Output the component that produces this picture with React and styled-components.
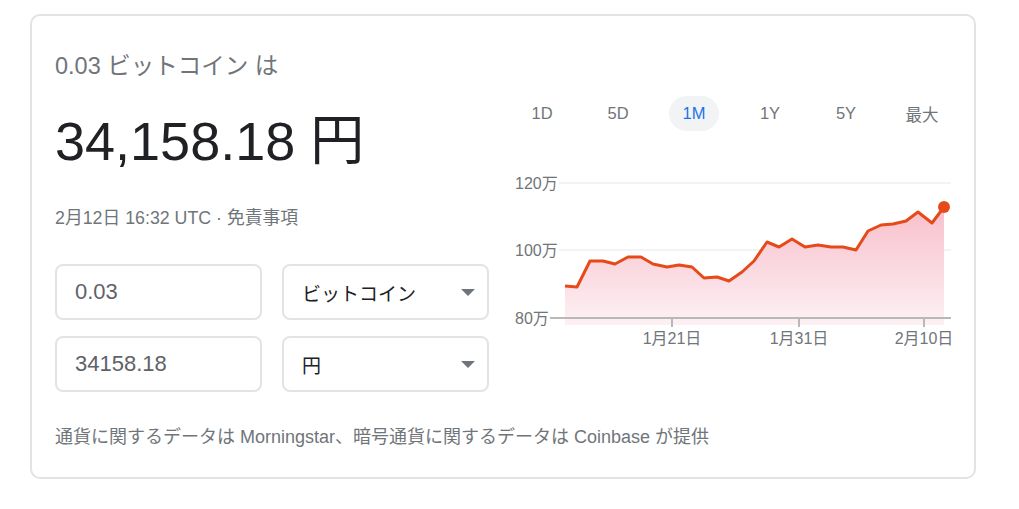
import React from 'react';
import styled, { createGlobalStyle } from 'styled-components';

const GlobalStyle = createGlobalStyle`
  body {
    margin: 0;
    background: #fff;
    font-family: "Liberation Sans", Arial, "Noto Sans CJK JP", sans-serif;
  }
`;

const Card = styled.div`
  box-sizing: border-box;
  width: 946px;
  margin: 14px 0 0 30px;
  padding: 35px 23px 28px 23px;
  border: 2px solid #e2e3e6;
  border-radius: 10px;
`;

const TopGrid = styled.div`
  display: grid;
  grid-template-columns: 434px 1fr;
  column-gap: 21px;
`;

const LeftCol = styled.div`
  display: flex;
  flex-direction: column;
`;

const Title = styled.div`
  font-size: 23.5px;
  line-height: 30px;
  color: #70757a;
`;

const Amount = styled.div`
  margin-top: 28px;
  font-size: 54px;
  line-height: 64px;
  color: #202124;
`;

const Updated = styled.div`
  margin-top: 33px;
  font-size: 17.8px;
  line-height: 24px;
  color: #70757a;
`;

const ConverterGrid = styled.div`
  margin-top: 34px;
  display: grid;
  grid-template-columns: 207px 207px;
  gap: 16px 20px;
`;

const AmountInput = styled.input`
  box-sizing: border-box;
  width: 100%;
  height: 56px;
  margin: 0;
  padding: 0 18px;
  border: 2px solid #e2e3e6;
  border-radius: 8px;
  font-family: inherit;
  font-size: 22px;
  color: #5f6368;
  background: #fff;
  outline: none;
`;

const Select = styled.div`
  box-sizing: border-box;
  height: 56px;
  padding: 0 12px 0 18px;
  border: 2px solid #e2e3e6;
  border-radius: 8px;
  display: flex;
  align-items: center;
  justify-content: space-between;
  font-size: 19px;
  color: #202124;
`;

const Caret = styled.span`
  width: 0;
  height: 0;
  border-left: 7px solid transparent;
  border-right: 7px solid transparent;
  border-top: 7px solid #70757a;
`;

const ChartCol = styled.div`
  display: flex;
  flex-direction: column;
`;

const RangeTabs = styled.div`
  margin-top: 45px;
  padding-left: 7px;
  display: flex;
  gap: 26px;
`;

const RangeTab = styled.div`
  width: 50px;
  height: 35px;
  border-radius: 18px;
  display: flex;
  align-items: center;
  justify-content: center;
  font-size: 16.5px;
  color: ${p => (p.$active ? '#1a73e8' : '#70757a')};
  background: ${p => (p.$active ? '#f1f3f4' : 'transparent')};
`;

const ChartSvg = styled.svg`
  display: block;
  margin-top: 35px;
  overflow: visible;
`;

const Footer = styled.div`
  margin-top: 33px;
  font-size: 18px;
  line-height: 24px;
  color: #70757a;
`;

const OX = 510;
const OY = 166;

const PTS = [
  [565, 286], [577, 287], [590, 261], [603, 261], [615, 264], [628, 257],
  [641, 257], [653, 264], [667, 267], [679, 265], [692, 267], [704, 278],
  [717, 277], [729, 281], [742, 272], [754, 261], [767, 242], [779, 247],
  [792, 239], [805, 247], [818, 245], [831, 247], [843, 247], [856, 250],
  [868, 231], [881, 225], [893, 224], [906, 221], [918, 212], [932, 223],
  [944, 207],
].map(([x, y]) => [x - OX, y - OY]);

const yLabels = [
  { t: '120万', y: 183, x1: 559 },
  { t: '100万', y: 250, x1: 559 },
];

const xLabels = [
  { t: '1月21日', x: 672 },
  { t: '1月31日', x: 799 },
  { t: '2月10日', x: 924 },
];

const PriceChart = () => {
  const line = PTS.map(p => p.join(',')).join(' ');
  const first = PTS[0];
  const last = PTS[PTS.length - 1];
  const bottom = 325 - OY;
  const area = `${first[0]},${bottom} ${line} ${last[0]},${bottom}`;
  const base = 318 - OY;

  return (
    <ChartSvg width="441" height="190" viewBox="0 0 441 190">
      <defs>
        <linearGradient id="fillGrad" x1="0" y1="0" x2="0" y2="1">
          <stop offset="0%" stopColor="#f8bfcc" />
          <stop offset="100%" stopColor="#fdf1f4" />
        </linearGradient>
      </defs>
      {yLabels.map(l => (
        <g key={l.t}>
          <line x1={l.x1 - OX} x2="441" y1={l.y - OY} y2={l.y - OY} stroke="#f1f3f4" strokeWidth="2" />
          <text x="5" y={l.y - OY + 6} fontSize="16" fill="#70757a">{l.t}</text>
        </g>
      ))}
      <polygon points={area} fill="url(#fillGrad)" />
      <line x1={550 - OX} x2="441" y1={base} y2={base} stroke="#b9b9b9" strokeWidth="2" />
      <text x="5" y={base + 6} fontSize="16" fill="#70757a">80万</text>
      {xLabels.map(l => (
        <g key={l.t}>
          <line x1={l.x - OX} x2={l.x - OX} y1={base} y2={base + 9} stroke="#b9b9b9" strokeWidth="2" />
          <text x={l.x - OX} y={344 - OY} fontSize="16" fill="#70757a" textAnchor="middle">{l.t}</text>
        </g>
      ))}
      <polyline points={line} fill="none" stroke="#e64a19" strokeWidth="3" strokeLinejoin="round" />
      <circle cx={last[0]} cy={last[1]} r="6" fill="#e64a19" />
    </ChartSvg>
  );
};

const ranges = ['1D', '5D', '1M', '1Y', '5Y', '最大'];

const App = () => (
  <>
    <GlobalStyle />
    <Card>
      <TopGrid>
        <LeftCol>
          <Title>0.03 ビットコイン は</Title>
          <Amount>34,158.18 円</Amount>
          <Updated>2月12日 16:32 UTC · 免責事項</Updated>
          <ConverterGrid>
            <AmountInput defaultValue="0.03" />
            <Select>ビットコイン<Caret /></Select>
            <AmountInput defaultValue="34158.18" />
            <Select>円<Caret /></Select>
          </ConverterGrid>
        </LeftCol>
        <ChartCol>
          <RangeTabs>
            {ranges.map(r => (
              <RangeTab key={r} $active={r === '1M'}>{r}</RangeTab>
            ))}
          </RangeTabs>
          <PriceChart />
        </ChartCol>
      </TopGrid>
      <Footer>通貨に関するデータは Morningstar、暗号通貨に関するデータは Coinbase が提供</Footer>
    </Card>
  </>
);

export default App;
